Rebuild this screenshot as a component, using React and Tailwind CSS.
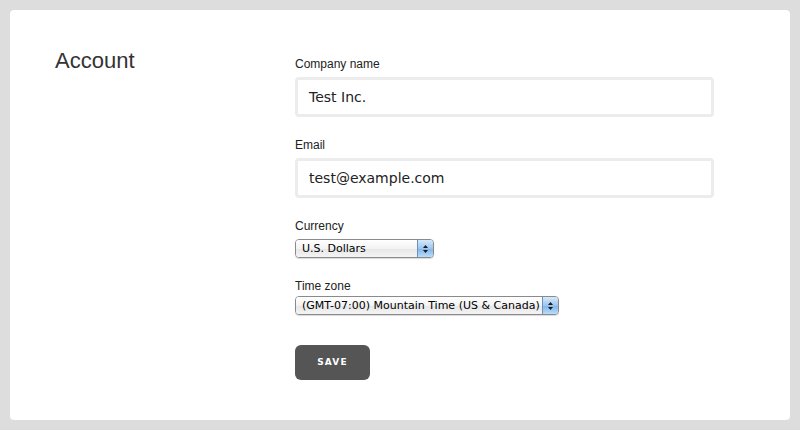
import React from "react";

function Arrows() {
  return (
    <svg width="7" height="10" viewBox="0 0 7 10">
      <path d="M3.5 1 L6 4 L1 4 Z" fill="#1a1a1a" />
      <path d="M3.5 9 L6 6 L1 6 Z" fill="#1a1a1a" />
    </svg>
  );
}

function AquaSelect({ value, width }) {
  return (
    <div
      className="flex h-[19px] rounded-[4px] border border-[#8a8a8a] overflow-hidden shadow-[0_1px_1px_rgba(0,0,0,0.15)]"
      style={{ width }}
    >
      <div className="flex-1 min-w-0 flex items-center pl-[6px] bg-[linear-gradient(#ffffff,#f3f3f3_50%,#e6e6e6_51%,#f4f4f4)] text-[11px] text-black font-['DejaVu_Sans',sans-serif] leading-none whitespace-nowrap overflow-hidden">
        {value}
      </div>
      <div className="w-[16px] shrink-0 flex items-center justify-center border-l border-[#6f8fb6] bg-[linear-gradient(#d6e9fb,#9cc6ef_50%,#7fb3ea_51%,#b9dcfb)]">
        <Arrows />
      </div>
    </div>
  );
}

function Label({ children }) {
  return (
    <div className="text-[12px] leading-[16px] text-[#222] font-['Liberation_Sans',Arial,sans-serif]">
      {children}
    </div>
  );
}

function TextInput({ value }) {
  return (
    <div className="w-[419px] h-[40px] rounded-[4px] border-[3px] border-[#ececec] flex items-center pl-[11px] text-[14px] text-[#222] font-['DejaVu_Sans',sans-serif]">
      {value}
    </div>
  );
}

export default function App() {
  return (
    <div className="w-[800px] h-[430px] bg-[#dddddd] p-[10px]">
      <div className="h-[410px] bg-white rounded-[4px] flex">
        <div className="w-[285px] pl-[45px] pt-[37px] text-[22px] leading-[28px] text-[#333] font-['Liberation_Sans',Arial,sans-serif]">
          Account
        </div>
        <div className="pt-[46px] flex flex-col">
          <Label>Company name</Label>
          <div className="mt-[5px]">
            <TextInput value="Test Inc." />
          </div>
          <div className="mt-[20px]">
            <Label>Email</Label>
          </div>
          <div className="mt-[5px]">
            <TextInput value="test@example.com" />
          </div>
          <div className="mt-[20px]">
            <Label>Currency</Label>
          </div>
          <div className="mt-[5px]">
            <AquaSelect value="U.S. Dollars" width={139} />
          </div>
          <div className="mt-[20px]">
            <Label>Time zone</Label>
          </div>
          <div className="mt-[2px]">
            <AquaSelect value="(GMT-07:00) Mountain Time (US & Canada)" width={264} />
          </div>
          <button className="mt-[30px] w-[75px] h-[35px] rounded-[6px] bg-[#555555] text-white text-[9px] font-bold tracking-[1.2px] font-['DejaVu_Sans',sans-serif] flex items-center justify-center">
            SAVE
          </button>
        </div>
      </div>
    </div>
  );
}
